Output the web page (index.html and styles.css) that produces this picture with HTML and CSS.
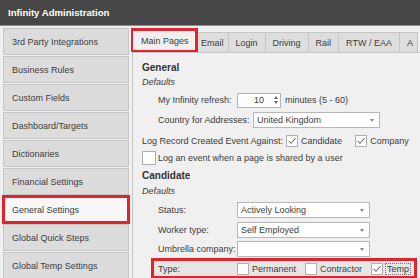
FILE: index.html
```html
<!DOCTYPE html>
<html lang="en">

<head>
  <meta charset="UTF-8">
  <meta name="viewport" content="width=device-width, initial-scale=1.0">
  <title>Infinity Administration</title>
  <link rel="stylesheet" href="styles.css">
</head>

<body>
  <header class="titlebar">
    <span>Infinity Administration</span>
  </header>

  <div class="main">
    <nav class="sidebar">
      <div class="nav-item">3rd Party Integrations</div>
      <div class="nav-item">Business Rules</div>
      <div class="nav-item">Custom Fields</div>
      <div class="nav-item">Dashboard/Targets</div>
      <div class="nav-item">Dictionaries</div>
      <div class="nav-item">Financial Settings</div>
      <div class="nav-item active">General Settings</div>
      <div class="nav-item">Global Quick Steps</div>
      <div class="nav-item">Global Temp Settings</div>
    </nav>

    <div class="panel">
      <div class="tabs">
        <div class="tab active">Main Pages</div>
        <div class="tab email">Email</div>
        <div class="tab">Login</div>
        <div class="tab">Driving</div>
        <div class="tab">Rail</div>
        <div class="tab">RTW / EAA</div>
        <div class="tab last">A</div>
      </div>

      <div class="content">
        <div class="heading">General</div>
        <div class="sub">Defaults</div>

        <div class="row indent">
          <span class="lbl">My Infinity refresh:</span>
          <span class="spin">10
            <span class="spin-btn">
              <i class="up"></i>
              <i class="down"></i>
            </span>
          </span>
          <span class="after">minutes (5 - 60)</span>
        </div>

        <div class="row indent">
          <span class="lbl wide">Country for Addresses:</span>
          <span class="select country">United Kingdom<i class="arrow"></i></span>
        </div>

        <div class="row log">
          <span>Log Record Created Event Against:</span>
          <span class="check on"><svg width="12" height="12"><polyline points="3,6 5,8.5 9.5,3" /></svg></span>
          <span class="opt">Candidate</span>
          <span class="check on"><svg width="12" height="12"><polyline points="3,6 5,8.5 9.5,3" /></svg></span>
          <span class="opt">Company</span>
          <span class="check on"><svg width="12" height="12"><polyline points="3,6 5,8.5 9.5,3" /></svg></span>
        </div>

        <div class="row share">
          <span class="check big"></span>
          <span class="opt">Log an event when a page is shared by a user</span>
        </div>

        <div class="heading cand">Candidate</div>
        <div class="sub two">Defaults</div>

        <div class="row indent">
          <span class="lbl">Status:</span>
          <span class="select">Actively Looking<i class="arrow"></i></span>
        </div>

        <div class="row indent">
          <span class="lbl">Worker type:</span>
          <span class="select">Self Employed<i class="arrow"></i></span>
        </div>

        <div class="row indent short">
          <span class="lbl">Umbrella company:</span>
          <span class="select"><i class="arrow"></i></span>
        </div>

        <div class="row type-row">
          <span class="lbl">Type:</span>
          <span class="check"></span>
          <span class="opt">Permanent</span>
          <span class="check"></span>
          <span class="opt">Contractor</span>
          <span class="check on"><svg width="12" height="12"><polyline points="3,6 5,8.5 9.5,3" /></svg></span>
          <span class="opt focus">Temp</span>
        </div>
      </div>
    </div>
  </div>
</body>

</html>
```

FILE: styles.css
```css
body {
  margin: 0;
  width: 420px;
  height: 278px;
  overflow: hidden;
  background: #f0f0f0;
  font: normal 9px "Liberation Sans", Arial, sans-serif;
  color: #3c3c3c;
}

.titlebar {
  height: 25px;
  background: #474747;
  border-bottom: 1px solid #8c8c8c;
  display: flex;
  align-items: center;
  padding-left: 8px;
  color: white;
  font-weight: bold;
  font-size: 9.6px;
}

.main {
  display: flex;
}

/* menu on the left */
.sidebar {
  width: 126px;
  padding: 2px 0 0 3px;
  flex-shrink: 0;
}

.nav-item {
  height: 25px;
  margin-bottom: 1px;
  border: 1px solid #c6c6c6;
  background: #dcdcdc;
  padding-left: 8px;
  display: flex;
  align-items: center;
}

.nav-item.active {
  background: #f7f7f7;
  outline: 3px solid #e3232b;
  outline-offset: -2px;
}

/* tabs + page */
.panel {
  flex: 1;
  margin-left: 2px;
  min-width: 0;
}

.tabs {
  height: 26px;
  display: flex;
  align-items: flex-end;
  white-space: nowrap;
  overflow: hidden;
}

.tab {
  flex-shrink: 0;
  height: 19px;
  padding: 0 7px;
  border: 1px solid #c6c6c6;
  border-bottom: none;
  margin-left: -1px;
  background: #dedede;
  display: flex;
  align-items: center;
}

.tab.email {
  padding: 0 4px;
}

.tab.last {
  padding-right: 4px;
}

.tab.active {
  box-sizing: border-box;
  height: 23px;
  width: 66px;
  margin-left: 0;
  position: relative;
  z-index: 1;
  background: #f0f0f0;
  outline: 3px solid #e3232b;
  outline-offset: -2px;
  padding: 0 0 0 9px;
}

.content {
  margin-left: 1px;
  height: 230px;
  border-top: 1px solid #c6c6c6;
  border-left: 1px solid #c6c6c6;
  padding: 6px 0 0 9px;
  white-space: nowrap;
}

.heading {
  height: 16px;
  display: flex;
  align-items: center;
  font-weight: bold;
  font-size: 10px;
  color: #333;
}

.heading.cand {
  height: 17px;
  margin-top: 1px;
}

.sub {
  height: 14px;
  display: flex;
  align-items: center;
  font-style: italic;
  margin-bottom: 1px;
}

.sub.two {
  margin-bottom: 2px;
}

.row {
  height: 20px;
  display: flex;
  align-items: center;
}

.row.indent {
  padding-left: 16px;
}

.row.short {
  height: 18px;
}

.lbl {
  width: 79px;
  flex-shrink: 0;
}

.lbl.wide {
  width: 95px;
}

.spin {
  width: 44px;
  height: 15px;
  box-sizing: border-box;
  background: white;
  border: 1px solid #b4b4b4;
  display: flex;
  align-items: center;
  justify-content: space-between;
  padding-left: 16px;
}

.spin-btn {
  width: 9px;
  height: 13px;
  display: flex;
  flex-direction: column;
  justify-content: center;
  align-items: center;
  gap: 2px;
}

.spin-btn i {
  width: 0;
  height: 0;
  border-left: 2.5px solid transparent;
  border-right: 2.5px solid transparent;
}

.spin-btn .up {
  border-bottom: 3px solid #666;
}

.spin-btn .down {
  border-top: 3px solid #666;
}

.after {
  margin-left: 4px;
}

.select {
  width: 133px;
  height: 16px;
  box-sizing: border-box;
  background: white;
  border: 1px solid #b8b8b8;
  padding-left: 3px;
  display: flex;
  align-items: center;
  position: relative;
}

.select.country {
  width: 127px;
}

.arrow {
  position: absolute;
  right: 5px;
  top: 6px;
  width: 0;
  height: 0;
  border-left: 2.5px solid transparent;
  border-right: 2.5px solid transparent;
  border-top: 3px solid #888;
}

.check {
  width: 12px;
  height: 12px;
  box-sizing: border-box;
  background: white;
  border: 1px solid #b0b0b0;
  display: inline-flex;
  flex-shrink: 0;
}

.check svg {
  margin: -1px;
}

.check polyline {
  fill: none;
  stroke: #5a5a5a;
  stroke-width: 1;
}

.check.big {
  width: 14px;
  height: 14px;
}

.opt {
  margin-left: 3px;
}

.row.log {
  height: 18px;
  margin-top: 2px;
}

.row.log > span:first-child {
  margin-right: 3px;
}

.row.log .opt {
  margin-right: 13px;
}

.row.share {
  height: 16px;
}

.row.share .opt {
  margin-left: 2px;
}

.type-row {
  width: 256px;
  height: 15px;
  margin: 0 0 0 9px;
  padding-left: 4px;
  background: #e6e6e6;
  border: 3px solid #e3232b;
}

.type-row .opt {
  margin-right: 9px;
}

.type-row .focus {
  outline: 1px dotted #777;
  padding: 0 1px;
}
```
